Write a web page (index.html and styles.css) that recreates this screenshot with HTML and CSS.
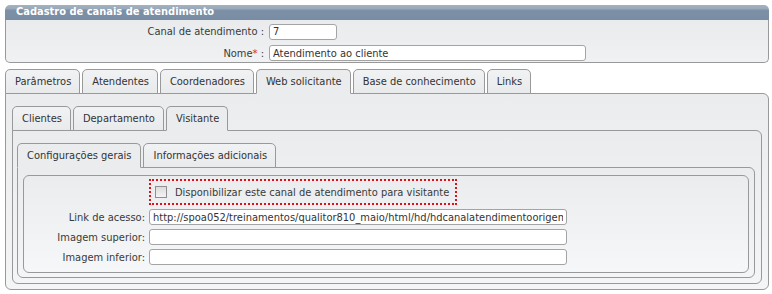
FILE: index.html
```html
<!DOCTYPE html>
<html lang="pt">
<head>
<meta charset="utf-8">
<title>Cadastro de canais de atendimento</title>
<link rel="stylesheet" href="styles.css">
</head>
<body>
<section class="box">
  <header class="box-title">Cadastro de canais de atendimento</header>
  <div class="box-body form-grid head-grid">
    <label class="lbl">Canal de atendimento :</label>
    <input class="txt w-short" type="text" value="7">
    <label class="lbl">Nome<span class="req">*</span> :</label>
    <input class="txt w-long" type="text" value="Atendimento ao cliente">
  </div>
</section>

<div class="tabset lvl1">
  <ul class="tabs">
    <li class="tab">Parâmetros</li>
    <li class="tab">Atendentes</li>
    <li class="tab">Coordenadores</li>
    <li class="tab active">Web solicitante</li>
    <li class="tab">Base de conhecimento</li>
    <li class="tab">Links</li>
  </ul>
  <div class="panel p1">
    <div class="tabset">
      <ul class="tabs">
        <li class="tab">Clientes</li>
        <li class="tab">Departamento</li>
        <li class="tab active">Visitante</li>
      </ul>
      <div class="panel p2">
        <div class="tabset">
          <ul class="tabs">
            <li class="tab">Configurações gerais</li>
            <li class="tab">Informações adicionais</li>
          </ul>
          <div class="panel p3">
            <fieldset class="fs form-grid body-grid">
              <span></span>
              <label class="chk-wrap">
                <span class="chk"></span>
                <span>Disponibilizar este canal de atendimento para visitante</span>
              </label>
              <label class="lbl">Link de acesso:</label>
              <input class="txt w-field" type="text" value="http://spoa052/treinamentos/qualitor810_maio/html/hd/hdcanalatendimentoorigem">
              <label class="lbl">Imagem superior:</label>
              <input class="txt w-field" type="text" value="">
              <label class="lbl">Imagem inferior:</label>
              <input class="txt w-field" type="text" value="">
            </fieldset>
          </div>
        </div>
      </div>
    </div>
  </div>
</div>
</body>
</html>
```

FILE: styles.css
```css
* { box-sizing: border-box; }
html, body { margin: 0; background: #fff; }
body {
  padding: 5px 3px 0 5px;
  font-family: "DejaVu Sans Condensed", "DejaVu Sans", Verdana, sans-serif;
  font-size: 11px;
  color: #3a3a3a;
}

.box { width: 764px; }
.box-title {
  height: 15px;
  line-height: 14px;
  padding-left: 11px;
  color: #fff;
  font-weight: bold;
  border-radius: 5px 5px 0 0;
  background: linear-gradient(#a3b1c0 0, #9aa9b9 4px, #7d90a6 5px, #788ca3 100%);
}
.box-body {
  border: 1px solid #999;
  border-top: none;
  border-radius: 0 0 5px 5px;
  background: linear-gradient(#e9ebec, #eff1f2);
  height: 43px;
  padding-top: 3px;
}

.form-grid {
  display: grid;
  row-gap: 4px;
  align-items: center;
}
.head-grid { grid-template-columns: 258px auto; column-gap: 5px; justify-content: start; }
.lbl { text-align: right; white-space: nowrap; color: #3a3a3a; }
.req { color: #e0202a; }

.txt {
  height: 16px;
  border: 1px solid #a4a4a4;
  border-radius: 3px;
  background: #fff;
  font: inherit;
  color: #333;
  padding: 0 3px;
  margin: 0;
}
.w-short { width: 68px; }
.w-long { width: 317px; }
.w-field { width: 418px; }

.tabset { display: flex; flex-direction: column; }
.lvl1 { margin-top: 6px; width: 764px; }
.tabs {
  list-style: none;
  margin: 0;
  padding: 0;
  display: flex;
  gap: 2px;
  position: relative;
  z-index: 1;
}
.tab {
  height: 25px;
  line-height: 23px;
  padding: 0 8px 0 9px;
  border: 1px solid #999;
  border-radius: 5px 5px 0 0;
  background: linear-gradient(#f1f2f3, #e8eaeb);
  color: #333;
  white-space: nowrap;
  margin-bottom: -1px;
}
.tab.active {
  background: #eaeced;
  border-bottom-color: #eaeced;
}
.p2 .tabs .tab:first-child {
  background: #eaeced;
  border-bottom-color: #eaeced;
  padding: 0 9px;
}

.panel {
  border: 1px solid #999;
  border-radius: 0 6px 6px 6px;
  background: linear-gradient(#eaeced, #f3f5f6);
}
.p1 { height: 197px; padding: 12px 6px 0 6px; }
.p2 { height: 154px; padding: 12px 6px 0 4px; }
.p3 { height: 111px; padding: 7px 5px 0 5px; }

.fs {
  margin: 0;
  border: 1px solid #999;
  border-radius: 6px;
  height: 98px;
  padding: 3px 0 0 0;
  min-width: 0;
  grid-template-columns: 121px auto;
  column-gap: 4px;
  justify-content: start;
  align-content: start;
  background: linear-gradient(#eaeced, #f5f7f8);
}
.chk-wrap {
  display: flex;
  align-items: center;
  gap: 8px;
  width: 308px;
  height: 26px;
  padding-left: 4px;
  border: 2px dotted #e0101a;
  color: #3a3a3a;
}
.chk {
  width: 12px;
  height: 12px;
  border: 1px solid #8f8f8f;
  background: linear-gradient(#dcdcdc, #f4f4f4);
}
```
